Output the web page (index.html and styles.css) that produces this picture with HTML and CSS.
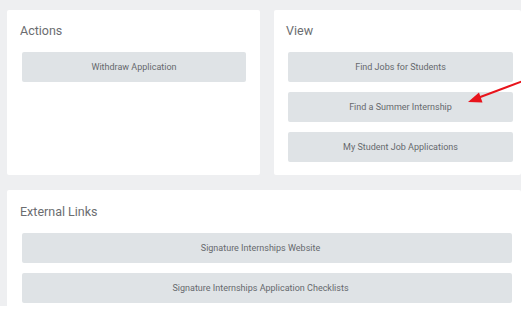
FILE: index.html
```html
<!DOCTYPE html>
<html lang="en">
<head>
    <meta charset="UTF-8">
    <title>Student Jobs</title>
    <link rel="stylesheet" href="styles.css">
</head>
<body>
    <div class="page">
        <div class="row">
            <!-- Actions -->
            <section class="card card-actions">
                <h2>Actions</h2>
                <div class="buttons">
                    <a class="btn">Withdraw Application</a>
                </div>
            </section>

            <!-- View -->
            <section class="card card-view">
                <h2>View</h2>
                <div class="buttons">
                    <a class="btn">Find Jobs for Students</a>
                    <a class="btn">Find a Summer Internship</a>
                    <a class="btn">My Student Job Applications</a>
                </div>
            </section>
        </div>

        <!-- External Links -->
        <section class="card card-links">
            <h2>External Links</h2>
            <div class="buttons">
                <a class="btn">Signature Internships Website</a>
                <a class="btn">Signature Internships Application Checklists</a>
            </div>
        </section>
    </div>

    <!-- Red annotation arrow -->
    <svg class="arrow" width="60" height="30" viewBox="0 0 60 30">
        <line x1="62" y1="1" x2="14" y2="19" stroke="#e8141c" stroke-width="2"/>
        <polygon points="7,22 18,12.5 21.5,22.5" fill="#e8141c"/>
    </svg>
</body>
</html>
```

FILE: styles.css
```css
body {
    margin: 0;
    background-color: #fff;
    font-family: Roboto, 'Liberation Sans', sans-serif;
}

.page {
    background-color: #eeeff1;
    height: 306px;
    padding: 10px 0 0 7px;
    box-sizing: border-box;
    overflow: hidden;
}

.row {
    display: flex;
    gap: 14px;
    margin-bottom: 15px;
}

/* Cards */
.card {
    background-color: #fff;
    border-radius: 2px;
    padding: 13px 14px 13px 15px;
    box-sizing: border-box;
}
.card-actions {
    width: 253px;
    height: 165px;
}
.card-view {
    flex: 1;
    height: 165px;
    padding-left: 14px;
    padding-right: 0;
}
.card-view h2 {
    margin-left: -1px;
}
.card-view .buttons {
    width: 225px;
}
.card-links {
    height: 140px;
    padding-top: 14px;
}
.card-links .buttons {
    width: 490px;
}
.card-links .btn {
    padding-right: 13px;
}

.card h2 {
    margin: 0 0 13px -2px;
    font-size: 12.5px;
    font-weight: 400;
    color: #6b6d70;
    line-height: 16px;
}

/* Buttons */
.buttons {
    display: flex;
    flex-direction: column;
    gap: 10px;
}
.btn {
    display: flex;
    align-items: center;
    justify-content: center;
    height: 30px;
    background-color: #dfe3e6;
    border-radius: 2px;
    font-size: 9px;
    color: #66696d;
    cursor: pointer;
}

/* Annotation */
.arrow {
    position: absolute;
    left: 461px;
    top: 80px;
}
```
